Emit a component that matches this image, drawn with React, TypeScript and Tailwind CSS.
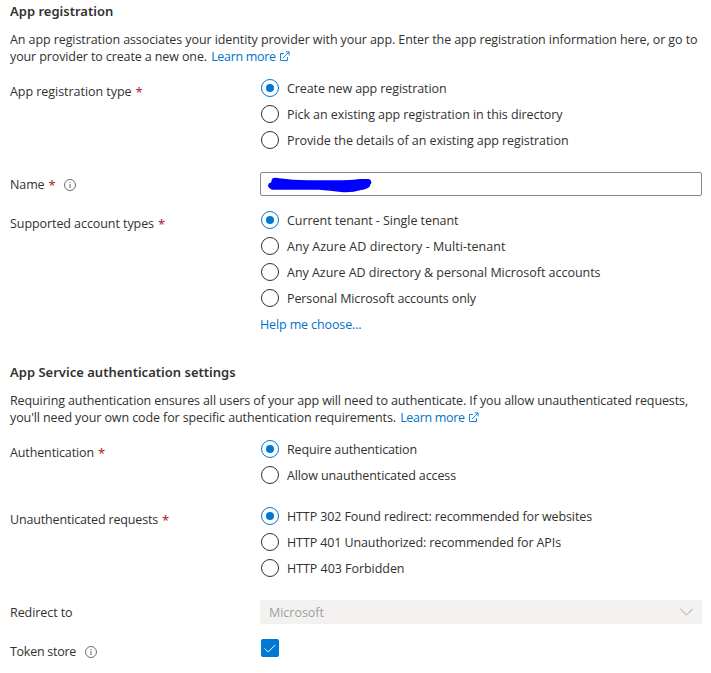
import type { ReactNode } from "react";

const BLUE = "#0078d4";

function ExternalIcon() {
  return (
    <svg className="ml-[3px] inline-block align-[-1px]" width="11" height="11" viewBox="0 0 11 11" fill="none" stroke={BLUE} strokeWidth="0.9">
      <path d="M5 2.5H1.5V9.5H8.5V6.2" />
      <path d="M3.8 7.2L10 1M6.5 0.9H10.1V4.5" />
    </svg>
  );
}

function InfoIcon() {
  return (
    <svg width="12" height="12" viewBox="0 0 12 12" fill="none" stroke="#605e5c">
      <circle cx="6" cy="6" r="5.5" strokeWidth="0.9" />
      <path d="M6 5V9M6 3V4" strokeWidth="1" />
    </svg>
  );
}

function Link({ children, tracking }: { children: ReactNode; tracking: string }) {
  return <a className={`text-[#0072c9] ${tracking}`}>{children}</a>;
}

function Label({ text, tracking, required = false, info = "" }: { text: string; tracking: string; required?: boolean; info?: string }) {
  return (
    <div className="flex h-[18px] w-[250px] shrink-0 items-center leading-[18px]">
      <span className={`pt-0.5 ${tracking}`}>{text}</span>
      {required && <span className="ml-1 w-1.5 pt-0.5 font-['Noto_Sans',sans-serif] text-[13px] text-[#a4262c]">*</span>}
      {info && <span className={`mt-px ${info}`}><InfoIcon /></span>}
    </div>
  );
}

function Radio({ text, tracking, checked = false }: { text: string; tracking: string; checked?: boolean }) {
  return (
    <label className="flex h-[18px] items-center">
      <span className={`flex size-[18px] shrink-0 items-center justify-center rounded-full border ${checked ? "border-[#0078d4]" : "border-[#323130]"}`}>
        {checked && <span className="size-2 rounded-full bg-[#0078d4]" />}
      </span>
      <span className={`ml-2 pt-0.5 leading-[18px] ${tracking}`}>{text}</span>
    </label>
  );
}

function Group({ children }: { children: ReactNode }) {
  return <div className="ml-px flex flex-col gap-2">{children}</div>;
}

function Heading({ children }: { children: ReactNode }) {
  return <h2 className="h-[18px] font-['Noto_Sans',sans-serif] text-[13px] leading-[18px] font-semibold tracking-[0.01px]">{children}</h2>;
}

export default function App() {
  return (
    <main className="h-[673px] w-[711px] overflow-hidden bg-white pt-0.5 pl-2.5 font-['Open_Sans','Noto_Sans',sans-serif] text-[12.5px] whitespace-nowrap text-[#323130]">
      <Heading>App registration</Heading>
      <div className="mt-[11px] leading-[17px]">
        <p className="h-[17px] tracking-[-0.088px]">An app registration associates your identity provider with your app. Enter the app registration information here, or go to</p>
        <p className="h-[17px]">
          <span className="mr-px tracking-[-0.112px]">your provider to create a new one. </span>
          <Link tracking="tracking-[-0.323px]">Learn more</Link>
          <ExternalIcon />
        </p>
      </div>

      <div className="mt-3.5 flex">
        <div className="mt-[3px]"><Label text="App registration type" tracking="tracking-[-0.043px]" required /></div>
        <Group>
          <Radio text="Create new app registration" tracking="tracking-[-0.097px]" checked />
          <Radio text="Pick an existing app registration in this directory" tracking="tracking-[-0.073px]" />
          <Radio text="Provide the details of an existing app registration" tracking="tracking-[-0.07px]" />
        </Group>
      </div>

      <div className="mt-[23px] flex h-6 items-center">
        <Label text="Name" tracking="tracking-[-0.112px]" required info="ml-[9px]" />
        <div className="flex h-6 w-[442px] items-center rounded-[2px] border border-[#8a8886] pl-[7px]">
          <svg className="mt-px" width="104" height="16" viewBox="0 0 104 16" fill="#0000fe">
            <path d="M4 2Q6 0 11 1.2Q25 3 40 3.2H75Q88 2.8 92 2H101Q103.5 3 103.5 6Q102 7 102 9Q100 12 93 13Q84 15.8 73 15Q62 13.5 51 12.8H4Q0 11 0 8.3Q0.5 5.8 3 5.5Z" />
          </svg>
        </div>
      </div>

      <div className="mt-[15px] flex">
        <div className="mt-[3px]"><Label text="Supported account types" tracking="tracking-[-0.071px]" required /></div>
        <div>
          <Group>
            <Radio text="Current tenant - Single tenant" tracking="tracking-[-0.049px]" checked />
            <Radio text="Any Azure AD directory - Multi-tenant" tracking="tracking-[0.046px]" />
            <Radio text="Any Azure AD directory & personal Microsoft accounts" tracking="tracking-[-0.025px]" />
            <Radio text="Personal Microsoft accounts only" tracking="tracking-[-0.112px]" />
          </Group>
          <div className="mt-[9px] h-[17px] leading-[18px]"><Link tracking="tracking-[-0.126px]">Help me choose...</Link></div>
        </div>
      </div>

      <div className="mt-[30px]"><Heading>App Service authentication settings</Heading></div>
      <div className="mt-[11px] leading-[17px]">
        <p className="h-[17px] tracking-[-0.115px]">Requiring authentication ensures all users of your app will need to authenticate. If you allow unauthenticated requests,</p>
        <p className="h-[17px]">
          <span className="mr-px tracking-[-0.102px]">you'll need your own code for specific authentication requirements. </span>
          <Link tracking="tracking-[-0.323px]">Learn more</Link>
          <ExternalIcon />
        </p>
      </div>

      <div className="mt-3.5 flex">
        <div className="mt-[3px]"><Label text="Authentication" tracking="tracking-[-0.123px]" required /></div>
        <Group>
          <Radio text="Require authentication" tracking="tracking-[-0.152px]" checked />
          <Radio text="Allow unauthenticated access" tracking="tracking-[-0.114px]" />
        </Group>
      </div>

      <div className="mt-[23px] flex">
        <div className="mt-[3px]"><Label text="Unauthenticated requests" tracking="tracking-[-0.164px]" required /></div>
        <Group>
          <Radio text="HTTP 302 Found redirect: recommended for websites" tracking="tracking-[-0.116px]" checked />
          <Radio text="HTTP 401 Unauthorized: recommended for APIs" tracking="tracking-[-0.111px]" />
          <Radio text="HTTP 403 Forbidden" tracking="tracking-[-0.045px]" />
        </Group>
      </div>

      <div className="mt-[23px] flex h-6 items-center">
        <Label text="Redirect to" tracking="tracking-[-0.075px]" />
        <div className="flex h-6 w-[442px] items-center justify-between rounded-[2px] bg-[#f3f2f1] pr-[9px] pl-[9px] text-[#a19f9d]">
          <span className="pt-0.5 leading-[18px] tracking-[-0.017px]">Microsoft</span>
          <svg width="13" height="8" viewBox="0 0 13 8" fill="none" stroke="#a19f9d">
            <path d="M0.4 1L6.5 7L12.6 1" />
          </svg>
        </div>
      </div>

      <div className="mt-[15px] flex">
        <div className="mt-[3px]"><Label text="Token store" tracking="tracking-[-0.269px]" info="ml-[9px]" /></div>
        <span className="ml-px flex size-[18px] items-center justify-center rounded-[2px] bg-[#0078d4]">
          <svg width="12" height="9" viewBox="0 0 12 9" fill="none" stroke="white">
            <path d="M0.7 4.5L4.2 8L11.3 0.9" />
          </svg>
        </span>
      </div>
    </main>
  );
}
